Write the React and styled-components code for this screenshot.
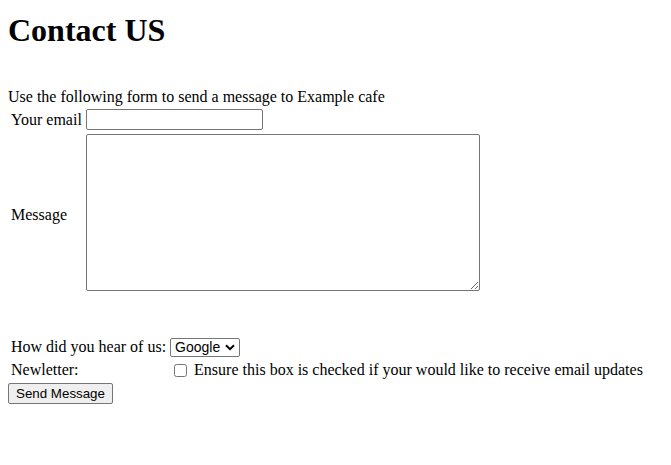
import React from "react";
import styled, { createGlobalStyle } from "styled-components";

const GlobalStyle = createGlobalStyle`
  html, body { margin: 0; padding: 0; background: #ffffff; }
  body {
    font-family: "Liberation Serif", "Times New Roman", serif;
    font-size: 16px;
    color: #000000;
  }
`;

const Page = styled.div`
  padding: 12px 8px 8px 8px;
`;

const Title = styled.h1`
  margin: 0 0 40px 0;
  font-size: 32px;
  font-weight: bold;
  line-height: 36px;
`;

const Intro = styled.div`
  line-height: 18px;
`;

const FormTable = styled.table`
  border-spacing: 2px;
  border-collapse: separate;
  margin-bottom: ${(p) => p.$gap || 0}px;
  td {
    padding: 1px;
    vertical-align: middle;
  }
`;

const Label = styled.td`
  white-space: nowrap;
  text-align: left;
`;

const TextInput = styled.input`
  box-sizing: border-box;
  width: 177px;
  height: 21px;
  padding: 1px 2px;
  border: 1px solid #767676;
  border-radius: 2px;
  font-family: "Liberation Sans", Arial, sans-serif;
  font-size: 13.33px;
  vertical-align: middle;
`;

const MessageArea = styled.textarea`
  box-sizing: border-box;
  width: 394px;
  height: 157px;
  padding: 2px;
  border: 1px solid #767676;
  border-radius: 2px;
  font-family: "Liberation Mono", monospace;
  font-size: 13.33px;
`;

const SelectWrap = styled.span`
  position: relative;
  display: inline-block;
  vertical-align: middle;
`;

const Select = styled.select`
  appearance: none;
  -webkit-appearance: none;
  box-sizing: border-box;
  display: block;
  width: 70px;
  height: 19px;
  margin: 0;
  padding: 0 18px 0 4px;
  font-family: "Liberation Sans", Arial, sans-serif;
  font-size: 14px;
  line-height: 17px;
  border: 1px solid #767676;
  border-radius: 2px;
  background: #ffffff;
  color: #000;
`;

const Chevron = styled.svg`
  position: absolute;
  right: 5px;
  top: 6px;
  width: 10px;
  height: 7px;
  pointer-events: none;
`;

const Check = styled.input`
  margin: 3px 3px 3px 4px;
  width: 13px;
  height: 13px;
  vertical-align: -2px;
`;

const SubmitButton = styled.button`
  display: block;
  box-sizing: border-box;
  width: 105px;
  height: 21px;
  padding: 1px 6px;
  border: 1px solid #767676;
  border-radius: 2px;
  background: #efefef;
  font-family: "Liberation Sans", Arial, sans-serif;
  font-size: 13.33px;
  color: #000;
`;

export default function App() {
  return (
    <>
      <GlobalStyle />
      <Page>
        <Title>Contact US</Title>
        <Intro>Use the following form to send a message to Example cafe</Intro>
        <FormTable $gap={36}>
          <tbody>
            <tr>
              <Label>Your email</Label>
              <td>
                <TextInput type="email" />
              </td>
            </tr>
            <tr>
              <Label>Message</Label>
              <td>
                <MessageArea />
              </td>
            </tr>
          </tbody>
        </FormTable>
        <FormTable>
          <tbody>
            <tr>
              <Label>How did you hear of us:</Label>
              <td>
                <SelectWrap>
                  <Select defaultValue="google">
                    <option value="google">Google</option>
                    <option value="friend">Friend</option>
                    <option value="other">Other</option>
                  </Select>
                  <Chevron viewBox="0 0 10 7" aria-hidden="true">
                    <path d="M1 1.2 L5 5.2 L9 1.2" fill="none" stroke="#000" strokeWidth="2" />
                  </Chevron>
                </SelectWrap>
              </td>
            </tr>
            <tr>
              <Label>Newletter:</Label>
              <td>
                <Check type="checkbox" /> Ensure this box is checked if your would like to receive email updates
              </td>
            </tr>
          </tbody>
        </FormTable>
        <SubmitButton type="submit">Send Message</SubmitButton>
      </Page>
    </>
  );
}
